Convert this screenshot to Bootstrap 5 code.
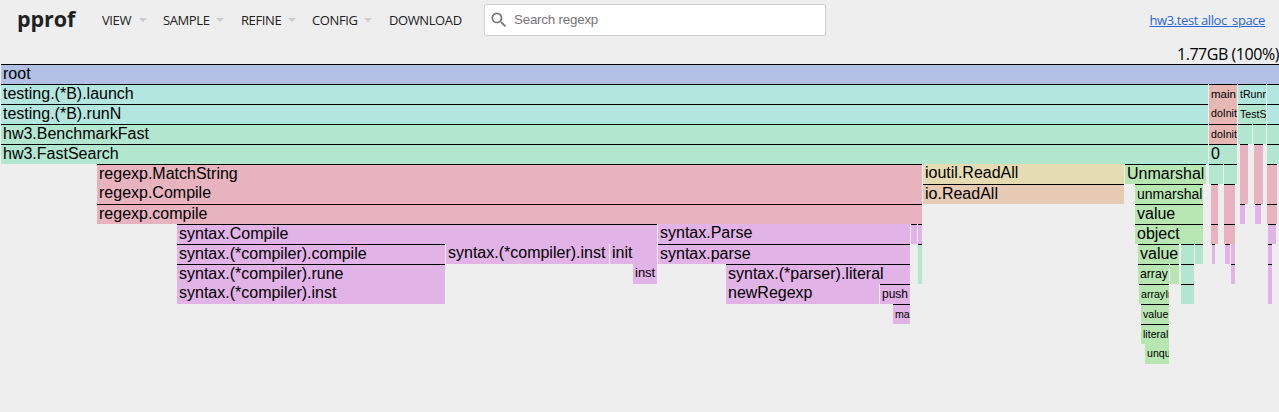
<!DOCTYPE html>
<html lang="en">
<head>
<meta charset="utf-8">
<title>pprof</title>
<link href="https://cdn.jsdelivr.net/npm/bootstrap@5.3.0/dist/css/bootstrap.min.css" rel="stylesheet">
<style>
body{background:#eee;color:#212121;font-family:"Open Sans","Noto Sans",sans-serif;height:412px;overflow:hidden}
.topbar{height:40px;padding:0 14px 0 17px;line-height:20px}
.brand-name{font-size:21.5px;font-weight:700;width:85px;letter-spacing:-.05px;padding-bottom:2px}
.menu-entry{font-size:13px;white-space:nowrap;letter-spacing:-.4px}
.menu-entry .arrow{border:4px solid transparent;border-top-color:#ccc;border-bottom:0}
.menu-entry .label-text{display:block}
.search-box{width:342px;height:32px;border:1px solid #d1d2d3;border-radius:2px;background:#fff;padding-left:4px}
.search-box input{border:0;outline:0;font:13.33px "Liberation Sans",sans-serif;letter-spacing:-.2px;padding:0 0 1px;margin-left:5px;background:none}
.search-box input::placeholder{color:#757575;opacity:1}
.profile-link{font-size:13px;color:#2a66d9;letter-spacing:-.4px}
.totals{height:24px;line-height:28px;font-size:16px;color:#000;white-space:nowrap;letter-spacing:-.45px}
.flame{font-family:"Liberation Sans",sans-serif;color:#000}
.level{height:20px}
.frame-box{height:20px;line-height:18px;padding-left:2px;overflow:hidden;white-space:nowrap;flex:none}
.frame-box.lined{border-top:1px solid #000}
.c-root{background-color:#b3c0e6}.c-teal{background-color:#b3e6de}.c-green{background-color:#b3e6cf}
.c-salmon{background-color:#e6b8b3}.c-pink{background-color:#e6b3be}.c-purple{background-color:#e2b3e6}
.c-yellow{background-color:#e6dcb3}.c-orange{background-color:#e6cab3}.c-lime{background-color:#b8e6b3}
</style>
</head>
<body>
<header class="topbar d-flex align-items-center">
  <div class="brand-name">pprof</div>
  <nav class="d-flex align-items-center">
    <div class="menu-entry d-flex align-items-center" style="width:61px"><span class="label-text" style="width:37px">VIEW</span><i class="arrow"></i></div>
    <div class="menu-entry d-flex align-items-center" style="width:78px"><span class="label-text" style="width:53px">SAMPLE</span><i class="arrow"></i></div>
    <div class="menu-entry d-flex align-items-center" style="width:71px"><span class="label-text" style="width:47px">REFINE</span><i class="arrow"></i></div>
    <div class="menu-entry d-flex align-items-center" style="width:77px"><span class="label-text" style="width:52px">CONFIG</span><i class="arrow"></i></div>
    <div class="menu-entry" style="width:95px">DOWNLOAD</div>
  </nav>
  <label class="search-box d-flex align-items-center">
    <svg width="20" height="20" viewBox="0 0 24 24" fill="#757575"><path d="M15.5 14h-.79l-.28-.27A6.47 6.47 0 0 0 16 9.5 6.5 6.5 0 1 0 9.5 16c1.61 0 3.09-.59 4.23-1.57l.27.28v.79l5 4.99L20.49 19l-4.99-5zm-6 0C7.01 14 5 11.99 5 9.5S7.01 5 9.5 5 14 7.01 14 9.5 11.99 14 9.5 14z"/></svg>
    <input type="text" placeholder="Search regexp">
  </label>
  <a class="profile-link ms-auto" href="#">hw3.test alloc_space</a>
</header>
<div class="totals text-end"><span>1.77GB (100%)</span></div>
<main class="flame" id="flame"></main>
<script src="https://cdn.jsdelivr.net/npm/bootstrap@5.3.0/dist/js/bootstrap.bundle.min.js"></script>
<script>
// Each level: [left, right, colour, has top line, label, font size]
const levels = [
 [[1,1279,'root',1,'root']],
 [[1,1208,'teal',1,'testing.(*B).launch'],[1209,1237,'salmon',1,'main',11.5],[1238,1266,'teal',1,'tRunn',10.6],[1267,1279,'teal',1]],
 [[1,1208,'teal',1,'testing.(*B).runN'],[1209,1237,'salmon',0,'doInit',10.6],[1238,1266,'green',1,'TestS',10.6],[1267,1279,'teal',1]],
 [[1,1208,'green',1,'hw3.BenchmarkFast'],[1209,1237,'salmon',1,'doInit',10.6],[1238,1252,'green',1],[1253,1266,'green',1],[1267,1279,'green',1]],
 [[1,1208,'green',1,'hw3.FastSearch'],[1209,1237,'green',1,'0'],[1240,1248,'pink',1],[1254,1263,'pink',1],[1267,1279,'green',1]],
 [[97,922,'pink',1,'regexp.MatchString'],[923,1124,'yellow',0,'ioutil.ReadAll'],[1125,1206,'lime',1,'Unmarshal'],[1209,1223,'green',1],[1224,1237,'green',1],[1240,1248,'pink',0],[1254,1263,'pink',0],[1267,1277,'pink',1]],
 [[97,922,'pink',0,'regexp.Compile'],[923,1124,'orange',1,'io.ReadAll'],[1135,1203,'lime',1,'unmarshal',14],[1211,1218,'pink',1],[1224,1235,'pink',1],[1240,1248,'pink',0],[1254,1263,'pink',0],[1267,1277,'pink',0]],
 [[97,922,'pink',1,'regexp.compile'],[1135,1203,'lime',1,'value'],[1211,1218,'pink',0],[1224,1235,'pink',0],[1240,1245,'purple',1],[1255,1261,'purple',1],[1267,1277,'pink',1]],
 [[177,657,'purple',1,'syntax.Compile'],[658,910,'purple',0,'syntax.Parse'],[911,917,'purple',1],[918,922,'purple',1],[1135,1203,'lime',1,'object'],[1211,1218,'pink',1],[1224,1235,'pink',1],[1268,1276,'purple',1]],
 [[177,445,'purple',1,'syntax.(*compiler).compile'],[446,609,'purple',0,'syntax.(*compiler).inst'],[610,657,'purple',0,'init'],[658,910,'purple',1,'syntax.parse'],[918,922,'green',1],[1138,1179,'lime',1,'value'],[1181,1194,'green',1],[1195,1203,'green',1],[1212,1215,'purple',1],[1225,1230,'purple',1],[1231,1235,'purple',0],[1268,1272,'purple',1]],
 [[177,445,'purple',1,'syntax.(*compiler).rune'],[633,657,'purple',0,'inst',13],[726,910,'purple',1,'syntax.(*parser).literal'],[918,922,'green',0],[1138,1169,'lime',1,'array',12.2],[1170,1179,'lime',1],[1181,1194,'green',1],[1231,1235,'purple',1],[1268,1272,'purple',1]],
 [[177,445,'purple',0,'syntax.(*compiler).inst'],[726,879,'purple',0,'newRegexp'],[880,910,'purple',1,'push',12],[1139,1169,'lime',1,'arrayIn',10.6],[1181,1194,'green',1],[1268,1272,'purple',0]],
 [[893,910,'purple',1,'ma',10.6],[1141,1169,'lime',1,'value',10.6]],
 [[1141,1169,'lime',1,'literal',10.6]],
 [[1145,1169,'lime',0,'unqu',10.6]]
];
document.getElementById('flame').innerHTML = levels.map(boxes => {
  let edge = 0;
  return '<div class="level d-flex">' + boxes.map(([l, r, colour, lined, label = '', size = 16]) => {
    const html = `<div class="frame-box c-${colour} ${lined ? 'lined' : ''}" style="margin-left:${l - edge}px;width:${r - l}px;font-size:${size}px">${label}</div>`;
    edge = r;
    return html;
  }).join('') + '</div>';
}).join('');
</script>
</body>
</html>
